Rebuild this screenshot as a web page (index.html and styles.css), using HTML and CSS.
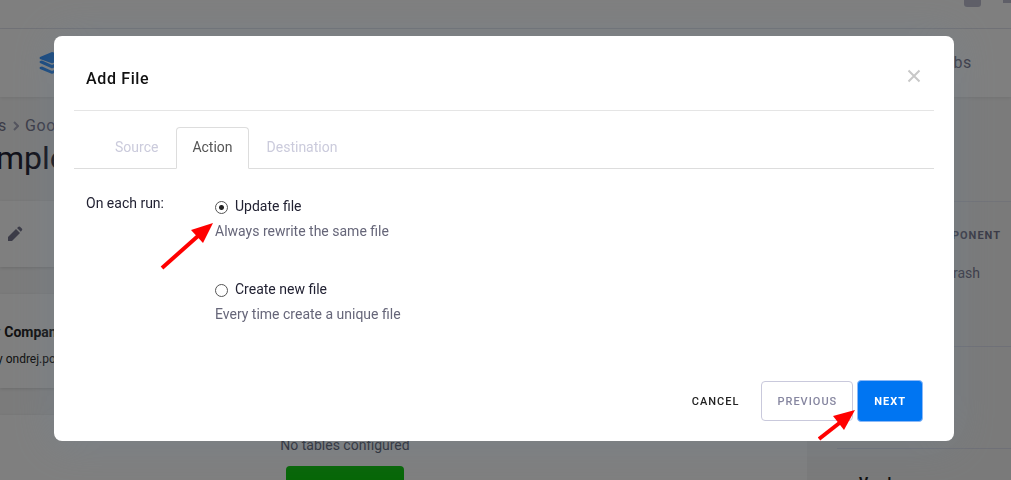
FILE: index.html
```
<!DOCTYPE html>
<html lang="en">
<head>
<meta charset="utf-8">
<title>Add File</title>
<link rel="stylesheet" href="styles.css">
</head>
<body>
<div class="page">
  <header class="topbar">
    <span class="topbar-box"></span>
    <span class="topbar-edge"></span>
  </header>
  <nav class="nav">
    <svg class="logo" width="26" height="24" viewBox="0 0 26 24" aria-hidden="true">
      <path d="M13 1 Q14 1 25 6 Q26 7 25 8 L14 12 Q13 12.4 12 12 L1 8 Q0 7 1 6 Z"/>
      <path d="M1 10 L3 9.6 L12 13.6 Q13 14 14 13.6 L23 9.6 L25 10 Q26 11 25 12 L14 17 Q13 17.400 12 17 L1 12 Q0 11 1 10 Z"/>
      <path d="M1 16 L3 15.600 L12 19.600 Q13 20 14 19.600 L23 15.600 L25 16 Q26 17 25 18 L14 22.600 Q13 23 12 22.600 L1 18 Q0 17 1 16 Z"/>
    </svg>
    <a class="nav-link" href="#">Jobs</a>
  </nav>
  <div class="heading">
    <div class="crumbs">
      <span>s</span>
      <svg width="6" height="10" viewBox="0 0 6 10" aria-hidden="true"><path d="M1 1 L5 5 L1 9"/></svg>
      <span>Goo</span>
    </div>
    <h1 class="page-title">mple</h1>
  </div>
  <div class="columns">
    <main class="main">
      <section class="card card-edit">
        <svg width="16" height="16" viewBox="0 0 16 16" aria-hidden="true"><path d="M1 11 L9 3 L13 7 L5 15 H1 Z M10 2 L11.500 .8 Q12.300 .2 13 .8 L15 2.800 Q15.600 3.500 15 4.300 L13.800 5.800 Z"/></svg>
      </section>
      <section class="card card-info">
        <p class="info-name"><span class="muted">r</span> Compan</p>
        <p class="info-by">y ondrej.po</p>
      </section>
      <section class="card card-tables">
        <p class="empty-text">No tables configured</p>
        <span class="green-button"></span>
      </section>
    </main>
    <aside class="sidebar">
      <div class="side-block side-first">
        <h2 class="side-title">COMPONENT</h2>
        <a class="side-link" href="#">Trash</a>
      </div>
      <div class="side-block side-gap"></div>
      <div class="side-block side-last"><strong>Vendor</strong></div>
    </aside>
  </div>
</div>

<div class="overlay">
  <form class="modal" role="dialog" aria-labelledby="dialog-title">
    <header class="modal-header">
      <h2 class="modal-title" id="dialog-title">Add File</h2>
      <button class="close" type="button" aria-label="Close">
        <svg width="14" height="14" viewBox="0 0 14 14" aria-hidden="true"><path d="M1.500 1.500 L12.500 12.500 M12.500 1.500 L1.500 12.500"/></svg>
      </button>
    </header>
    <div class="tabs" role="tablist">
      <button class="tab" type="button" role="tab">Source</button>
      <button class="tab tab-active" type="button" role="tab" aria-selected="true">Action</button>
      <button class="tab" type="button" role="tab">Destination</button>
    </div>
    <div class="modal-body">
      <span class="row-label" id="run-label">On each run:</span>
      <div class="options" role="radiogroup" aria-labelledby="run-label">
        <div class="option">
          <label class="option-label"><input class="radio" type="radio" name="run" checked>Update file</label>
          <p class="hint">Always rewrite the same file</p>
        </div>
        <div class="option">
          <label class="option-label"><input class="radio" type="radio" name="run">Create new file</label>
          <p class="hint">Every time create a unique file</p>
        </div>
      </div>
    </div>
    <footer class="modal-footer">
      <button class="btn btn-link" type="button">CANCEL</button>
      <button class="btn btn-outline" type="button">PREVIOUS</button>
      <button class="btn btn-primary" type="button">NEXT</button>
    </footer>
    <svg class="arrow arrow-option" width="54" height="48" viewBox="0 0 54 48" aria-hidden="true"><path class="shaft" d="M2 46 L38 14"/><path d="M53 1 L31 8 L43 21 Z"/></svg>
    <svg class="arrow arrow-next" width="38" height="32" viewBox="0 0 38 32" aria-hidden="true"><path class="shaft" d="M1 30 L24 12"/><path d="M37 1 L15 7 L26 21 Z"/></svg>
  </form>
</div>
</body>
</html>
```
FILE: styles.css
```
* { box-sizing: border-box; }
body {
  margin: 0;
  height: 100vh;
  overflow: hidden;
  font: 14px/20px Roboto, sans-serif;
  color: #222;
}
h1, h2, p { margin: 0; }
button { font: inherit; cursor: pointer; }
a { text-decoration: none; }

.page {
  height: 100vh;
  overflow: hidden;
  background: #f6f6f6;
}
.topbar {
  display: flex;
  justify-content: flex-end;
  gap: 22px;
  height: 29px;
  background: #fff;
  border-bottom: 1px solid #e4e6f0;
}
.topbar-box {
  width: 17px;
  height: 7px;
  border-radius: 0 0 3px 3px;
  background: #bfbfd0;
}
.topbar-edge {
  width: 8px;
  height: 3px;
  background: #bfbfd0;
}
.nav {
  display: flex;
  justify-content: space-between;
  align-items: center;
  height: 68px;
  padding: 0 39px;
  background: #fff;
  box-shadow: 0 1px 3px rgba(0, 0, 0, .08);
}
.logo { fill: #2b8fff; }
.nav-link {
  font-size: 16px;
  letter-spacing: .04em;
  color: #77778f;
}
.heading { height: 104px; padding-top: 19px; }
.crumbs {
  display: flex;
  align-items: center;
  gap: 6px;
  margin-left: -2px;
  font-size: 16px;
  letter-spacing: .04em;
  color: #77778f;
}
.crumbs svg {
  fill: none;
  stroke: #a9a9bd;
  stroke-width: 2;
}
.page-title {
  margin-left: -4px;
  font-size: 32px;
  line-height: 44px;
  font-weight: 400;
  color: #222233;
}
.columns { display: flex; }
.main {
  flex: 1;
  display: flex;
  flex-direction: column;
  gap: 27px;
}
.card {
  background: #fff;
  box-shadow: 0 1px 3px rgba(0, 0, 0, .12);
}
.card-edit { height: 66px; padding: 25px 7px; }
.card-edit svg { fill: #77778f; }
.card-info { height: 94px; padding-top: 28px; }
.info-name {
  margin-left: -4px;
  font-weight: 700;
}
.info-by {
  margin: 7px 0 0 -3px;
  font-size: 12px;
}
.muted { color: #8cbcef; font-weight: 400; }
.card-tables {
  display: flex;
  flex-direction: column;
  align-items: center;
  gap: 11px;
  height: 120px;
  padding: 20px 117px 0 0;
  color: #55576a;
}
.green-button {
  width: 118px;
  height: 40px;
  border-radius: 4px;
  background: #0dcc0d;
}
.sidebar {
  width: 204px;
  background: #f5f5f5;
  border-top: 1px solid #e4e6f0;
}
.side-block { border-bottom: 1px solid #dfe1ee; }
.side-first {
  display: flex;
  flex-direction: column;
  align-items: flex-end;
  gap: 17px;
  height: 145px;
  padding: 24px 10px 0 0;
}
.side-title {
  font-size: 11px;
  line-height: 20px;
  font-weight: 700;
  letter-spacing: 1px;
  color: #77778f;
}
.side-link {
  margin-right: 21px;
  color: #77778f;
}
.side-gap { height: 102px; margin-left: 30px; }
.side-last {
  padding: 24px 52px;
  border: 0;
}

.overlay {
  position: fixed;
  inset: 0;
  display: flex;
  align-items: flex-start;
  padding: 36px 57px 0 54px;
  background: rgba(0, 0, 0, .5);
}
.modal {
  position: relative;
  flex: 1;
  padding: 0 20px 19px;
  border-radius: 8px;
  background: #fff;
  box-shadow: 0 1px 40px rgba(112, 132, 150, .4);
}
.modal-header {
  display: flex;
  justify-content: space-between;
  align-items: center;
  padding: 33px 12px 21px;
  border-bottom: 1px solid #e5e5e5;
}
.modal-title {
  font-size: 16px;
  line-height: 20px;
  font-weight: 500;
  letter-spacing: .04em;
  color: #111;
}
.close {
  display: flex;
  padding: 0 1px 6px;
  border: 0;
  background: none;
}
.close svg {
  fill: none;
  stroke: #c8c8c8;
  stroke-width: 2;
}
.tabs {
  display: flex;
  gap: 2px;
  padding: 16px 25px 0;
  border-bottom: 1px solid #ddd;
}
.tab {
  height: 42px;
  margin-bottom: -1px;
  padding: 0 15px 2px;
  border: 1px solid transparent;
  border-radius: 4px 4px 0 0;
  background: none;
  color: #cbcbdc;
}
.tab-active {
  border-color: #ddd;
  border-bottom-color: #fff;
  background: #fff;
  color: #555;
}
.modal-body {
  display: grid;
  grid-template-columns: 129px 1fr;
  padding: 24px 12px 0;
}
.row-label { color: #222233; }
.options {
  display: flex;
  flex-direction: column;
  gap: 38px;
  padding-top: 3px;
}
.option {
  display: flex;
  flex-direction: column;
  align-items: flex-start;
  gap: 5px;
}
.option-label {
  display: flex;
  align-items: center;
  gap: 7px;
  color: #222233;
}
.radio {
  appearance: none;
  width: 13px;
  height: 13px;
  margin: 3px 0 0;
  border: 1px solid #555;
  border-radius: 50%;
}
.radio:checked { background: radial-gradient(circle, #222 2px, #fff 3px); }
.hint { color: #666679; }
.modal-footer {
  display: flex;
  justify-content: flex-end;
  gap: 4px;
  padding: 56px 11px 0 0;
}
.btn {
  height: 42px;
  padding: 2px 15px 0;
  border: 1px solid transparent;
  border-radius: 4px;
  background: none;
  font-size: 11px;
  font-weight: 500;
  letter-spacing: 1px;
}
.btn-link { padding: 2px 17px 0; color: #222; }
.btn-outline {
  height: 40px;
  margin-top: 1px;
  border-color: #c9c9dc;
  color: #8686a0;
}
.btn-primary {
  padding: 2px 16px 0;
  border-color: #8cb9f7;
  background: #0075f2;
  font-weight: 700;
  color: #fff;
}
.arrow { position: absolute; fill: #f00; }
.shaft { stroke: #f00; stroke-width: 4; }
.arrow-option { left: 106px; top: 186px; }
.arrow-next { right: 98px; bottom: 0; }
```
